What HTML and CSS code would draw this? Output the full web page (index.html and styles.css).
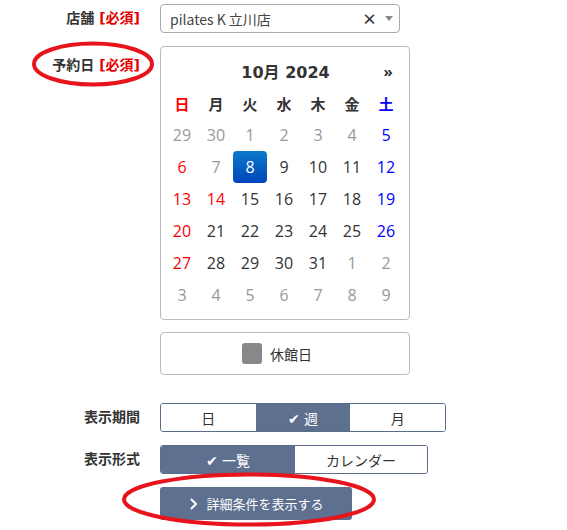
FILE: index.html
```html
<!DOCTYPE html>
<html lang="ja">
<head>
    <meta charset="UTF-8">
    <title>予約検索</title>
    <link rel="stylesheet" href="styles.css">
</head>
<body>
    <div class="form">
        <div class="label">店舗 <span class="req">[必須]</span></div>
        <div class="select">
            <span class="select-text">pilates K 立川店</span>
            <span class="select-clear">×</span>
            <span class="select-arrow"></span>
        </div>

        <div class="label label-date">予約日 <span class="req">[必須]</span></div>
        <div class="date-col">
            <div class="calendar">
                <div class="cal-head">
                    <span></span>
                    <span class="cal-title">10月 2024</span>
                    <span class="cal-next">»</span>
                </div>
                <div class="cal-grid" id="calGrid"></div>
            </div>
            <div class="legend">
                <span class="legend-box"></span>
                <span>休館日</span>
            </div>
        </div>

        <div class="label label-mid spaced">表示期間</div>
        <div class="seg seg-period spaced">
            <button class="seg-btn">日</button>
            <button class="seg-btn active"><span class="check">✔</span>週</button>
            <button class="seg-btn">月</button>
        </div>

        <div class="label label-mid">表示形式</div>
        <div class="seg seg-format">
            <button class="seg-btn active"><span class="check">✔</span>一覧</button>
            <button class="seg-btn">カレンダー</button>
        </div>

        <div></div>
        <div>
            <button class="more-btn">
                <svg class="chev" width="7" height="12" viewBox="0 0 7 12"><polyline points="1,1 6,6 1,11" fill="none" stroke="#fff" stroke-width="2"/></svg>
                詳細条件を表示する
            </button>
        </div>
    </div>

    <svg class="marks" width="567" height="530" viewBox="0 0 567 530">
        <ellipse cx="93" cy="64" rx="59" ry="20.5" fill="none" stroke="#e8141c" stroke-width="4"/>
        <ellipse cx="249" cy="499.5" rx="125" ry="25" fill="none" stroke="#e8141c" stroke-width="4"/>
    </svg>

    <script>
        const names = ["日", "月", "火", "水", "木", "金", "土"];
        const days = [
            [29, "o"], [30, "o"], [1, "o"], [2, "o"], [3, "o"], [4, "o"], [5, "sat"],
            [6, "sun"], [7, "o"], [8, "sel"], [9, ""], [10, ""], [11, ""], [12, "sat"],
            [13, "sun"], [14, "sun"], [15, ""], [16, ""], [17, ""], [18, ""], [19, "sat"],
            [20, "sun"], [21, ""], [22, ""], [23, ""], [24, ""], [25, ""], [26, "sat"],
            [27, "sun"], [28, ""], [29, ""], [30, ""], [31, ""], [1, "o"], [2, "o"],
            [3, "o"], [4, "o"], [5, "o"], [6, "o"], [7, "o"], [8, "o"], [9, "o"]
        ];
        const grid = document.getElementById("calGrid");
        grid.innerHTML =
            names.map((n, i) => `<div class="cell dow ${i === 0 ? 'sun' : i === 6 ? 'sat' : ''}">${n}</div>`).join('') +
            days.map(d => `<div class="cell ${d[1]}">${d[0]}</div>`).join('');
    </script>
</body>
</html>
```
FILE: styles.css
```css
body {
    margin: 0;
    font-family: "Noto Sans CJK JP", "Noto Sans", sans-serif;
    font-size: 14px;
    color: #333;
    background: #fff;
}

.form {
    display: grid;
    grid-template-columns: 140px 1fr;
    column-gap: 20px;
    row-gap: 13px;
    padding-top: 4px;
    align-items: start;
}

.label {
    text-align: right;
    font-family: "DejaVu Sans", "Noto Sans CJK JP", sans-serif;
    font-weight: bold;
    line-height: 29px;
    color: #333;
}

.label-date {
    padding-top: 5px;
}

.req {
    color: #e60000;
}

.spaced {
    margin-top: 15px;
}

.select {
    width: 240px;
    height: 29px;
    box-sizing: border-box;
    border: 1px solid #aaa;
    border-radius: 4px;
    display: flex;
    align-items: center;
    padding: 0 6px 0 9px;
}

.select-text {
    flex: 1;
    color: #444;
}

.select-clear {
    font-weight: bold;
    font-size: 15px;
    color: #333;
    margin-right: 8px;
}

.select-arrow {
    width: 0;
    height: 0;
    border-left: 4px solid transparent;
    border-right: 4px solid transparent;
    border-top: 5px solid #888;
}

.date-col {
    display: flex;
    flex-direction: column;
    gap: 12px;
}

.calendar {
    width: 250px;
    box-sizing: border-box;
    border: 1px solid #bbb;
    border-radius: 4px;
    padding: 8px 5px 8px 4px;
    font-family: "Open Sans", "Noto Sans CJK JP", sans-serif;
}

.cal-head {
    display: grid;
    grid-template-columns: 34px 1fr 34px;
    height: 32px;
    align-items: center;
    text-align: center;
}

.cal-title {
    font-family: "DejaVu Sans", "Noto Sans CJK JP", sans-serif;
    font-weight: bold;
    font-size: 16px;
    color: #333;
    margin-left: 2px;
}

.cal-next {
    font-size: 15px;
    font-weight: bold;
    color: #333;
    margin-left: 2px;
}

.cal-grid {
    display: grid;
    grid-template-columns: repeat(7, 34px);
    grid-auto-rows: 32px;
}

.cell {
    display: flex;
    align-items: center;
    justify-content: center;
    font-size: 16px;
    color: #333;
}

.cell.dow {
    font-weight: bold;
    font-size: 15px;
    font-family: "Noto Sans CJK JP", sans-serif;
}

.cell.o {
    color: #999;
}

.cell.sun {
    color: #f00;
}

.cell.sat {
    color: #00f;
}

.cell.sel {
    color: #fff;
    background: linear-gradient(#0a79c9, #0044bb);
    border-radius: 4px;
}

.legend {
    width: 250px;
    height: 43px;
    box-sizing: border-box;
    border: 1px solid #bbb;
    border-radius: 4px;
    display: flex;
    align-items: center;
    justify-content: center;
    gap: 8px;
    padding-right: 16px;
    color: #333;
}

.legend-box {
    width: 20px;
    height: 21px;
    background: #888;
    border-radius: 3px;
}

.seg {
    display: flex;
    border: 1px solid #5b6c8a;
    border-radius: 3px;
    overflow: hidden;
    height: 29px;
    box-sizing: border-box;
}

.seg-period {
    width: 286px;
}

.seg-format {
    width: 268px;
}

.seg-btn {
    flex: 1;
    border: none;
    background: #fff;
    color: #333;
    font-family: "Noto Sans CJK JP", sans-serif;
    font-size: 14px;
    padding: 0;
}

.seg-format .seg-btn:first-child {
    flex: 0 0 134px;
}

.seg-btn.active {
    background: #5e7090;
    color: #fff;
}

.check {
    font-size: 14px;
    margin-right: 4px;
}

.more-btn {
    width: 192px;
    height: 33px;
    border: none;
    border-radius: 3px;
    background: #5e7090;
    color: #fff;
    font-family: "Noto Sans CJK JP", sans-serif;
    font-size: 13px;
    padding: 0 0 0 2px;
    display: flex;
    align-items: center;
    justify-content: center;
    gap: 9px;
}

.marks {
    position: absolute;
    left: 0;
    top: 0;
    pointer-events: none;
}
```
